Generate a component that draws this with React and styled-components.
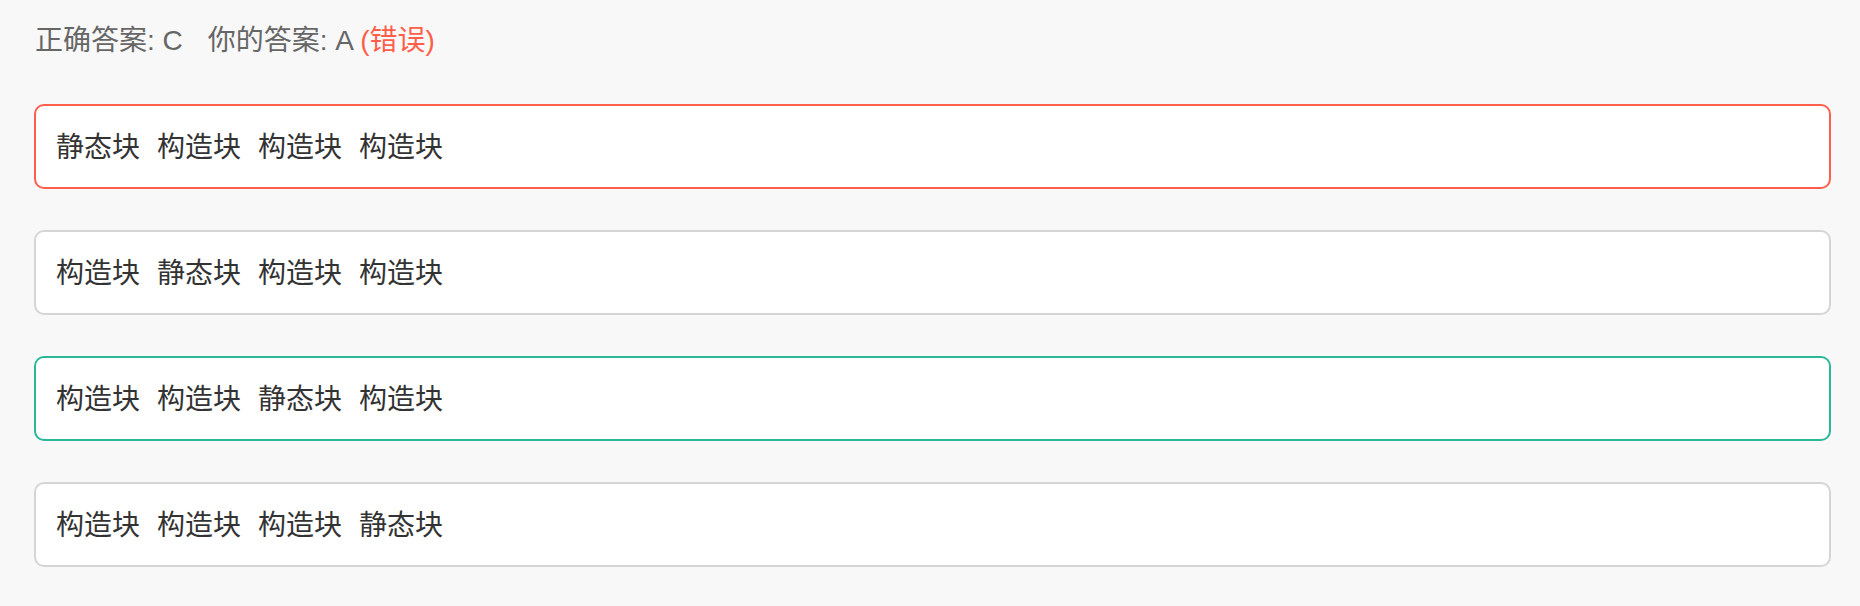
import React from "react";
import styled, { createGlobalStyle } from "styled-components";

const GlobalStyle = createGlobalStyle`
  html, body {
    margin: 0;
    padding: 0;
    background: #f8f8f8;
  }
  body {
    font-family: "Liberation Sans", "Noto Sans CJK SC", sans-serif;
  }
`;

const Page = styled.div`
  min-height: 606px;
  box-sizing: border-box;
  padding: 21px 29px 30px 34px;
  background: #f8f8f8;
`;

const Summary = styled.div`
  display: flex;
  align-items: center;
  gap: 25px;
  font-size: 28px;
  line-height: 40px;
  color: #666666;
  margin-left: 1px;
`;

const SummaryItem = styled.span`
  white-space: pre;
`;

const Verdict = styled.span`
  color: ${(p) => (p.$correct ? "#28b795" : "#ff5f4a")};
`;

const OptionList = styled.div`
  display: flex;
  flex-direction: column;
  gap: 41px;
  margin-top: 43px;
`;

const Option = styled.div`
  box-sizing: border-box;
  height: 85px;
  display: flex;
  align-items: center;
  padding: 0 20px 4px;
  background: #ffffff;
  border: 2px solid
    ${(p) =>
      p.$state === "wrong"
        ? "#ff5f4a"
        : p.$state === "right"
        ? "#2bb899"
        : "#d5d5d5"};
  border-radius: 10px;
`;

const Word = styled.span`
  font-family: "Noto Sans CJK SC", sans-serif;
  font-size: 28px;
  line-height: 40px;
  color: #333333;
  margin-right: 17px;
`;

const options = [
  { words: ["静态块", "构造块", "构造块", "构造块"], state: "wrong" },
  { words: ["构造块", "静态块", "构造块", "构造块"], state: "normal" },
  { words: ["构造块", "构造块", "静态块", "构造块"], state: "right" },
  { words: ["构造块", "构造块", "构造块", "静态块"], state: "normal" },
];

export default function App() {
  return (
    <>
      <GlobalStyle />
      <Page>
        <Summary>
          <SummaryItem>正确答案: C</SummaryItem>
          <SummaryItem>
            你的答案: A <Verdict>(错误)</Verdict>
          </SummaryItem>
        </Summary>
        <OptionList>
          {options.map((o, i) => (
            <Option key={i} $state={o.state}>
              {o.words.map((w, j) => (
                <Word key={j}>{w}</Word>
              ))}
            </Option>
          ))}
        </OptionList>
      </Page>
    </>
  );
}
